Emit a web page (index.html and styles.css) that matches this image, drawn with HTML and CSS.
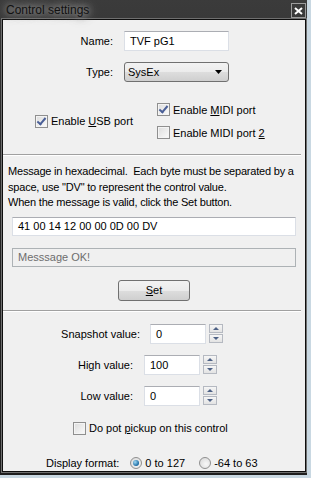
FILE: index.html
```html
<!DOCTYPE html>
<html lang="en">
<head>
    <meta charset="UTF-8">
    <title>Control settings</title>
    <link rel="stylesheet" href="styles.css">
</head>
<body>
    <div class="window">
        <div class="titlebar">
            <span class="title">Control settings</span>
            <span class="close-btn">
                <svg width="9" height="8" viewBox="0 0 9 8"><path d="M1 1 L8 7 M8 1 L1 7" stroke="#fff" stroke-width="2"/></svg>
            </span>
        </div>
        <div class="client">
            <div class="field-row">
                <label class="field-label">Name:</label>
                <div class="textbox name-box">TVF pG1</div>
            </div>
            <div class="field-row type-row">
                <label class="field-label">Type:</label>
                <div class="combo">
                    <span>SysEx</span>
                    <svg width="7" height="4" viewBox="0 0 7 4"><path d="M0 0 H7 L3.5 4 Z" fill="#000"/></svg>
                </div>
            </div>

            <div class="ports">
                <div class="port-usb">
                    <span class="check on"></span>
                    <span>Enable <u>U</u>SB port</span>
                </div>
                <div class="port-midi">
                    <div class="check-row">
                        <span class="check on"></span>
                        <span>Enable <u>M</u>IDI port</span>
                    </div>
                    <div class="check-row">
                        <span class="check"></span>
                        <span>Enable MIDI port <u>2</u></span>
                    </div>
                </div>
            </div>

            <div class="separator"></div>

            <p class="help">Message in hexadecimal.&nbsp; Each byte must be separated by a<br>space, use "DV" to represent the control value.<br>When the message is valid, click the Set button.</p>

            <div class="textbox hex-box">41 00 14 12 00 00 0D 00 DV</div>
            <div class="textbox status-box">Messsage OK!</div>
            <div class="button set-btn"><u>S</u>et</div>

            <div class="separator second"></div>

            <div class="field-row spin-row snapshot">
                <label class="field-label">Snapshot value:</label>
                <div class="textbox spin-box">0</div>
                <div class="spinner"><span class="up"></span><span class="down"></span></div>
            </div>
            <div class="field-row spin-row">
                <label class="field-label">High value:</label>
                <div class="textbox spin-box">100</div>
                <div class="spinner"><span class="up"></span><span class="down"></span></div>
            </div>
            <div class="field-row spin-row">
                <label class="field-label">Low value:</label>
                <div class="textbox spin-box">0</div>
                <div class="spinner"><span class="up"></span><span class="down"></span></div>
            </div>

            <div class="check-row pickup">
                <span class="check"></span>
                <span>Do pot <u>p</u>ickup on this control</span>
            </div>

            <div class="format-row">
                <span class="format-label">Display format:</span>
                <span class="radio on"></span>
                <span class="radio-text">0 to 127</span>
                <span class="radio"></span>
                <span>-64 to 63</span>
            </div>
        </div>
    </div>
</body>
</html>
```

FILE: styles.css
```css
:root {
    --face: #f0f0f0;
    --text: #000;
    --box-border: #abadb3;
}
body {
    margin: 0;
    background: #c9d8e2;
    font-family: "Liberation Sans", Arial, sans-serif;
    font-size: 11px;
    color: var(--text);
}
.window {
    width: 307px;
    height: 475px;
    background: linear-gradient(to bottom, #3b3b3b, #262626 40%, #1f1f1f);
    box-sizing: border-box;
    padding: 0 1px 0 2px;
}
.titlebar {
    height: 19px;
    display: flex;
    align-items: center;
    justify-content: space-between;
    padding-left: 4px;
}
.title {
    font-size: 12px;
    color: #111;
    text-shadow: 0 0 6px #9a9a9a, 0 0 10px #9a9a9a, 0 0 14px #8a8a8a;
}
.close-btn {
    width: 13px;
    height: 13px;
    border: 1px solid #9c9c9c;
    background: #3a3a3a;
    display: flex;
    align-items: center;
    justify-content: center;
    margin-top: 2px;
}
.client {
    height: 453px;
    background: var(--face);
    border: 1px solid #0e0e0e;
    box-shadow: 0 0 0 1px #6f6f6f;
    box-sizing: border-box;
    padding-top: 11px;
}
.field-row {
    display: flex;
    align-items: center;
    height: 20px;
}
.field-label {
    width: 110px;
    text-align: right;
    margin-right: 11px;
}
.textbox {
    height: 20px;
    box-sizing: border-box;
    background: #fff;
    border: 1px solid #dbdfe6;
    border-top-color: var(--box-border);
    padding: 0 5px;
    display: flex;
    align-items: center;
}
.name-box {
    width: 105px;
}
.type-row {
    margin-top: 11px;
}
.combo {
    width: 105px;
    height: 20px;
    box-sizing: border-box;
    border: 1px solid #707070;
    border-radius: 3px;
    background: linear-gradient(to bottom, #f2f2f2, #ebebeb 50%, #dddddd 51%, #cfcfcf);
    display: flex;
    align-items: center;
    justify-content: space-between;
    padding: 0 6px 0 3px;
}
.ports {
    display: flex;
    align-items: center;
    margin-top: 19px;
    padding-left: 32px;
}
.port-usb {
    width: 122px;
    display: flex;
    align-items: center;
}
.port-midi {
    display: flex;
    flex-direction: column;
    gap: 6px;
}
.check-row {
    display: flex;
    align-items: center;
    height: 17px;
}
.check {
    width: 13px;
    height: 13px;
    box-sizing: border-box;
    border: 1px solid #8f8f8f;
    background: linear-gradient(135deg, #dcdcdc, #fbfbfb);
    box-shadow: inset 0 0 0 1px #f4f4f4;
    margin-right: 3px;
    position: relative;
}
.check.on::after {
    content: "";
    position: absolute;
    left: 3px;
    top: 0px;
    width: 3px;
    height: 7px;
    border: solid #4a5f97;
    border-width: 0 2px 2px 0;
    transform: rotate(40deg);
}
.separator {
    margin: 13px 4px 0 0;
    height: 1px;
    background: #a0a0a0;
    border-bottom: 1px solid #fff;
}
.help {
    margin: 8px 0 0 5px;
    line-height: 15.5px;
    white-space: nowrap;
    letter-spacing: -0.2px;
}
.hex-box {
    margin: 6px 0 0 9px;
    width: 284px;
    height: 19px;
}
.status-box {
    margin: 12px 0 0 9px;
    width: 284px;
    height: 19px;
    background: var(--face);
    border: 1px solid #adb2b5;
    color: #6d6d6d;
}
.button {
    box-sizing: border-box;
    border: 1px solid #707070;
    border-radius: 3px;
    background: linear-gradient(to bottom, #f2f2f2, #ebebeb 50%, #dddddd 51%, #cfcfcf);
    display: flex;
    align-items: center;
    justify-content: center;
}
.set-btn {
    margin: 13px 0 0 115px;
    width: 72px;
    height: 21px;
}
.separator.second {
    margin-top: 9px;
}
.spin-row {
    margin-top: 11px;
}
.spin-row.snapshot {
    margin-top: 12px;
}
.spin-row .field-label {
    width: 130px;
}
.spin-row.snapshot .field-label {
    width: 137px;
    margin-right: 10px;
}
.spin-box {
    width: 56px;
}
.spinner {
    margin-left: 3px;
    display: flex;
    flex-direction: column;
    gap: 1px;
}
.spinner span {
    width: 14px;
    height: 9px;
    box-sizing: border-box;
    border: 1px solid #b5b9c1;
    background: linear-gradient(to bottom, #f6f6f6, #e3e3e3);
    display: flex;
    align-items: center;
    justify-content: center;
}
.spinner .up::after {
    content: "";
    border: 3px solid transparent;
    border-bottom: 3px solid #4d6185;
    border-top: 0;
}
.spinner .down::after {
    content: "";
    border: 3px solid transparent;
    border-top: 3px solid #4d6185;
    border-bottom: 0;
}
.pickup {
    margin-top: 14px;
    padding-left: 70px;
}
.format-row {
    display: flex;
    align-items: center;
    margin-top: 19px;
    padding-left: 43px;
    height: 15px;
}
.format-label {
    margin-right: 11px;
}
.radio {
    width: 12px;
    height: 12px;
    box-sizing: border-box;
    border-radius: 50%;
    border: 1px solid #8f8f8f;
    background: radial-gradient(circle at 60% 60%, #f8f8f8, #d5d5d5);
    margin-right: 3px;
    position: relative;
}
.radio.on::after {
    content: "";
    position: absolute;
    left: 2px;
    top: 2px;
    width: 6px;
    height: 6px;
    border-radius: 50%;
    background: radial-gradient(circle at 35% 35%, #9fd9f4, #1b6aa2 70%, #0e4a77);
}
.radio-text {
    margin-right: 14px;
}
```
